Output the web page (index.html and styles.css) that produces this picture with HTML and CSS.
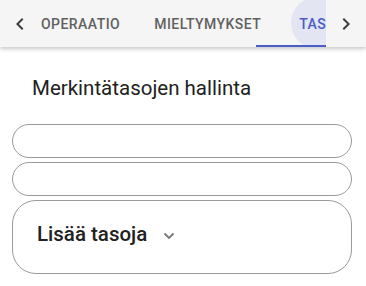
FILE: index.html
```html
<!DOCTYPE html>
<html lang="fi">
<head>
<meta charset="utf-8">
<link rel="stylesheet" href="styles.css">
</head>
<body>
<div class="tabbar">
  <div class="nav prev">
    <svg width="24" height="24" viewBox="0 0 24 24"><path d="M15.41 7.41L14 6l-6 6 6 6 1.41-1.41L10.83 12z" fill="#3c3c3c"/></svg>
  </div>
  <div class="viewport">
    <div class="tabs">
      <div class="tab">OPERAATIO</div>
      <div class="tab">MIELTYMYKSET</div>
      <div class="tab active"><span class="ripple"></span><span class="label">TASOT</span></div>
    </div>
    <div class="indicator"></div>
  </div>
  <div class="nav next">
    <svg width="24" height="24" viewBox="0 0 24 24"><path d="M10 6L8.59 7.41 13.17 12l-4.58 4.59L10 18l6-6z" fill="#3c3c3c"/></svg>
  </div>
</div>
<main class="content">
  <h1 class="title">Merkintätasojen hallinta</h1>
  <div class="field"></div>
  <div class="field"></div>
  <div class="field big">
    <span class="add">Lisää tasoja</span>
    <svg class="caret" width="12" height="8" viewBox="0 0 12 8"><polyline points="1.5,1.5 6,6 10.5,1.5" fill="none" stroke="#757575" stroke-width="1.8"/></svg>
  </div>
</main>
</body>
</html>
```
FILE: styles.css
```css
html, body {
  margin: 0;
  padding: 0;
  background: #ffffff;
  font-family: Roboto, "Noto Sans", sans-serif;
}
body {
  width: 366px;
  height: 286px;
  overflow: hidden;
}
.tabbar {
  display: flex;
  height: 47px;
  background: #f5f5f5;
  box-shadow: 0 2px 4px rgba(0,0,0,0.22);
  position: relative;
  z-index: 1;
}
.nav {
  display: flex;
  align-items: center;
  background: #f5f5f5;
  flex: none;
  position: relative;
  z-index: 2;
}
.prev {
  width: 36px;
  padding-left: 8px;
  box-sizing: border-box;
}
.next {
  width: 40px;
  padding-left: 8px;
  box-sizing: border-box;
}
.viewport {
  flex: 1;
  overflow: hidden;
  position: relative;
}
.tabs {
  display: flex;
  height: 47px;
  padding-left: 5px;
  gap: 34px;
}
.tab {
  flex: none;
  display: flex;
  align-items: center;
  font-size: 14px;
  font-weight: 500;
  letter-spacing: 0.45px;
  color: #616161;
  position: relative;
}
.tab.active {
  color: #4a5dc6;
  margin-left: 4px;
}
.label {
  position: relative;
}
.ripple {
  position: absolute;
  left: -8px;
  top: -3px;
  width: 52px;
  height: 52px;
  border-radius: 50%;
  background: #e3e5f3;
}
.indicator {
  position: absolute;
  left: 220px;
  bottom: 0;
  width: 80px;
  height: 2px;
  background: #4a5dc8;
}
.content {
  padding: 0 14px 0 12px;
}
.title {
  margin: 29px 0 24px 20px;
  font-size: 20.5px;
  line-height: 24px;
  font-weight: 400;
  color: #212121;
}
.field {
  height: 34px;
  box-sizing: border-box;
  border: 1px solid #9a9a9a;
  border-radius: 17px;
  margin-bottom: 4px;
}
.field.big {
  height: 74px;
  border-radius: 24px;
  display: flex;
  align-items: center;
  padding-left: 24px;
}
.add {
  font-size: 20.5px;
  font-weight: 500;
  color: #212121;
  padding-bottom: 6px;
}
.caret {
  margin-left: 16px;
  margin-top: -2px;
}
```
